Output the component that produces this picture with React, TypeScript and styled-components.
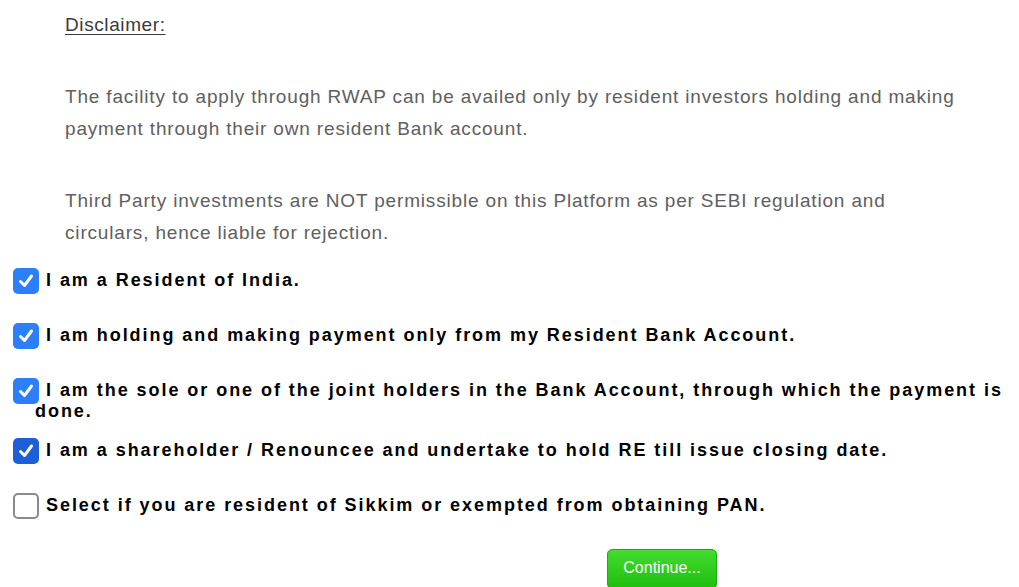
import React from 'react';
import styled, { createGlobalStyle } from 'styled-components';

const GlobalStyle = createGlobalStyle`
  html, body {
    margin: 0;
    padding: 0;
    background: #ffffff;
  }
  body {
    font-family: "Liberation Sans", Arial, sans-serif;
    overflow: hidden;
  }
`;

const Page = styled.div`
  width: 1019px;
  height: 587px;
  overflow: hidden;
`;

const Disclaimer = styled.section`
  padding: 12px 0 0 65px;
  color: #606060;
`;

const Heading = styled.div`
  font-size: 19px;
  line-height: 26px;
  letter-spacing: 0.6px;
  color: #3a3a3a;
  text-decoration: underline;
  text-underline-offset: 3px;
  margin-bottom: 43px;
`;

const Para = styled.p`
  margin: 0 0 40px;
  font-size: 19px;
  line-height: 32px;
  max-width: 920px;
  letter-spacing: 0.83px;

  &:last-child {
    margin-bottom: 0;
  }
`;

const Checks = styled.div`
  margin-top: 21px;
`;

const Row = styled.label<{ $h?: number }>`
  display: block;
  height: ${(p) => p.$h ?? 55}px;
  padding-left: 35px;
  font-size: 18px;
  font-weight: bold;
  line-height: 20px;
  letter-spacing: 1.95px;
  color: #000;
`;

const Box = styled.span<{ $checked: boolean; $dark?: boolean }>`
  display: inline-flex;
  align-items: center;
  justify-content: center;
  box-sizing: border-box;
  width: 26px;
  height: 26px;
  margin: -4px 7px -3px -22px;
  vertical-align: middle;
  border-radius: 5px;
  background: ${(p) => (p.$checked ? (p.$dark ? '#1c5fd6' : '#2d7ff9') : '#fff')};
  border: ${(p) => (p.$checked ? 'none' : '2px solid #8a8a8a')};
`;

const Actions = styled.div`
  display: flex;
  padding-left: 607px;
  margin-top: -1px;
`;

const Button = styled.button`
  width: 110px;
  height: 40px;
  border: 1px solid #22a812;
  border-radius: 5px;
  background: linear-gradient(#43dc2f, #1fbe0d);
  color: #fff;
  font-family: "Liberation Sans", Arial, sans-serif;
  font-size: 16px;
  padding: 0 0 2px;
  cursor: pointer;
`;

const Tick = () => (
  <svg width="18" height="18" viewBox="0 0 18 18">
    <path d="M3.5 9.5 L7.5 13.5 L14.5 4" fill="none" stroke="#fff" strokeWidth="3" strokeLinecap="round" strokeLinejoin="round" />
  </svg>
);

const items = [
  { text: 'I am a Resident of India.', checked: true },
  { text: 'I am holding and making payment only from my Resident Bank Account.', checked: true },
  {
    text: 'I am the sole or one of the joint holders in the Bank Account, through which the payment is done.',
    checked: true,
    h: 60,
  },
  { text: 'I am a shareholder / Renouncee and undertake to hold RE till issue closing date.', checked: true, dark: true },
  { text: 'Select if you are resident of Sikkim or exempted from obtaining PAN.', checked: false },
];

export default function App() {
  return (
    <Page>
      <GlobalStyle />
      <Disclaimer>
        <Heading>Disclaimer:</Heading>
        <Para>
          The facility to apply through RWAP can be availed only by resident investors holding and making
          payment through their own resident Bank account.
        </Para>
        <Para>
          Third Party investments are NOT permissible on this Platform as per SEBI regulation and
          <br />
          circulars, hence liable for rejection.
        </Para>
      </Disclaimer>
      <Checks>
        {items.map((item) => (
          <Row key={item.text} $h={item.h}>
            <Box $checked={item.checked} $dark={item.dark}>
              {item.checked && <Tick />}
            </Box>
            {item.text}
          </Row>
        ))}
      </Checks>
      <Actions>
        <Button>Continue...</Button>
      </Actions>
    </Page>
  );
}
